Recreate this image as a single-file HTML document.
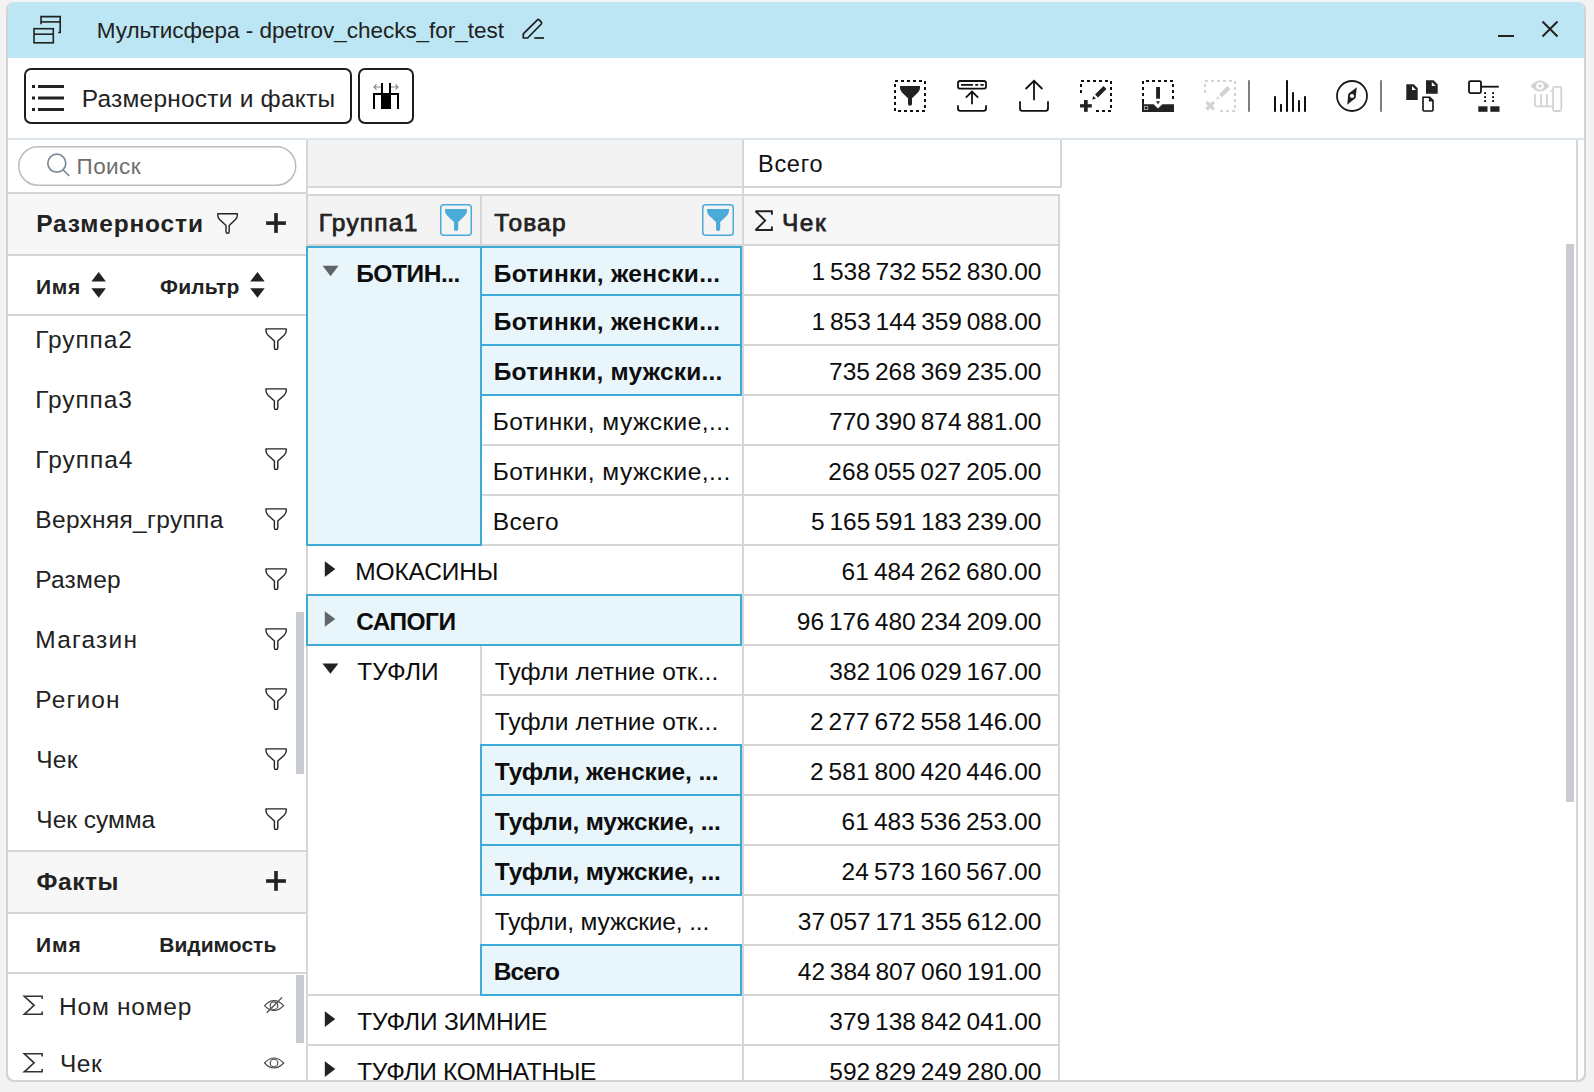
<!DOCTYPE html>
<html><head><meta charset="utf-8"><title>Мультисфера</title>
<style>html,body{margin:0;padding:0;background:#f3f3f3;overflow:hidden}svg{display:block}</style></head>
<body><svg width="1594" height="1092" viewBox="0 0 1594 1092">
<rect x="0" y="0" width="1594" height="1092" fill="#f3f3f3"/>
<rect x="6" y="2" width="1580" height="1080" rx="8" fill="#d3d3d3"/>
<rect x="8" y="2" width="1576" height="1078" rx="7" fill="#ffffff"/>
<path d="M8 58 V9 A7 7 0 0 1 15 2 H1577 A7 7 0 0 1 1584 9 V58 Z" fill="#bce6f3"/>
<rect x="8" y="138" width="1576" height="2" fill="#dfe5ec" />
<rect x="306" y="140" width="2" height="940" fill="#d6d6d6" />
<rect x="18.75" y="146.75" width="277" height="38.5" rx="19.25" fill="#fff" stroke="#bcbcbc" stroke-width="1.5"/>
<rect x="8" y="192" width="298" height="2" fill="#d6d6d6" />
<rect x="8" y="194" width="298" height="60" fill="#f7f7f7" />
<rect x="8" y="254" width="298" height="2" fill="#d6d6d6" />
<rect x="8" y="314" width="298" height="2" fill="#d6d6d6" />
<rect x="8" y="850" width="298" height="2" fill="#d6d6d6" />
<rect x="8" y="852" width="298" height="60" fill="#f7f7f7" />
<rect x="8" y="912" width="298" height="2" fill="#d6d6d6" />
<rect x="8" y="972" width="298" height="2" fill="#d6d6d6" />
<rect x="296" y="612" width="8" height="162" fill="#c8cbd0" />
<rect x="296" y="975" width="8" height="68" fill="#c8cbd0" />
<rect x="308" y="140" width="434" height="46" fill="#f3f3f3" />
<rect x="308" y="186" width="434" height="2" fill="#d6d6d6" />
<rect x="744" y="186" width="318" height="2" fill="#d6d6d6" />
<rect x="1060" y="140" width="2" height="48" fill="#d6d6d6" />
<rect x="742" y="140" width="2" height="940" fill="#d6d6d6" />
<rect x="308" y="194" width="752" height="2" fill="#d6d6d6" />
<rect x="308" y="196" width="172" height="48" fill="#f3f3f3" />
<rect x="482" y="196" width="260" height="48" fill="#f3f3f3" />
<rect x="744" y="196" width="314" height="48" fill="#f7f7f7" />
<rect x="480" y="196" width="2" height="48" fill="#d6d6d6" />
<rect x="1058" y="194" width="2" height="886" fill="#d6d6d6" />
<rect x="308" y="244" width="752" height="2" fill="#d6d6d6" />
<rect x="744" y="294" width="314" height="2" fill="#d6d6d6" />
<rect x="482" y="294" width="260" height="2" fill="#d6d6d6" />
<rect x="744" y="344" width="314" height="2" fill="#d6d6d6" />
<rect x="482" y="344" width="260" height="2" fill="#d6d6d6" />
<rect x="744" y="394" width="314" height="2" fill="#d6d6d6" />
<rect x="482" y="394" width="260" height="2" fill="#d6d6d6" />
<rect x="744" y="444" width="314" height="2" fill="#d6d6d6" />
<rect x="482" y="444" width="260" height="2" fill="#d6d6d6" />
<rect x="744" y="494" width="314" height="2" fill="#d6d6d6" />
<rect x="482" y="494" width="260" height="2" fill="#d6d6d6" />
<rect x="744" y="544" width="314" height="2" fill="#d6d6d6" />
<rect x="482" y="544" width="260" height="2" fill="#d6d6d6" />
<rect x="744" y="594" width="314" height="2" fill="#d6d6d6" />
<rect x="744" y="644" width="314" height="2" fill="#d6d6d6" />
<rect x="744" y="694" width="314" height="2" fill="#d6d6d6" />
<rect x="482" y="694" width="260" height="2" fill="#d6d6d6" />
<rect x="744" y="744" width="314" height="2" fill="#d6d6d6" />
<rect x="482" y="744" width="260" height="2" fill="#d6d6d6" />
<rect x="744" y="794" width="314" height="2" fill="#d6d6d6" />
<rect x="482" y="794" width="260" height="2" fill="#d6d6d6" />
<rect x="744" y="844" width="314" height="2" fill="#d6d6d6" />
<rect x="482" y="844" width="260" height="2" fill="#d6d6d6" />
<rect x="744" y="894" width="314" height="2" fill="#d6d6d6" />
<rect x="482" y="894" width="260" height="2" fill="#d6d6d6" />
<rect x="744" y="944" width="314" height="2" fill="#d6d6d6" />
<rect x="482" y="944" width="260" height="2" fill="#d6d6d6" />
<rect x="744" y="994" width="314" height="2" fill="#d6d6d6" />
<rect x="482" y="994" width="260" height="2" fill="#d6d6d6" />
<rect x="744" y="1044" width="314" height="2" fill="#d6d6d6" />
<rect x="744" y="1094" width="314" height="2" fill="#d6d6d6" />
<rect x="308" y="544" width="172" height="2" fill="#d6d6d6" />
<rect x="480" y="544" width="262" height="2" fill="#d6d6d6" />
<rect x="308" y="594" width="172" height="2" fill="#d6d6d6" />
<rect x="480" y="594" width="262" height="2" fill="#d6d6d6" />
<rect x="308" y="644" width="172" height="2" fill="#d6d6d6" />
<rect x="480" y="644" width="262" height="2" fill="#d6d6d6" />
<rect x="308" y="994" width="172" height="2" fill="#d6d6d6" />
<rect x="480" y="994" width="262" height="2" fill="#d6d6d6" />
<rect x="308" y="1044" width="172" height="2" fill="#d6d6d6" />
<rect x="480" y="1044" width="262" height="2" fill="#d6d6d6" />
<rect x="480" y="246" width="2" height="300" fill="#d6d6d6" />
<rect x="480" y="646" width="2" height="350" fill="#d6d6d6" />
<rect x="307" y="247" width="174" height="298" fill="#e8f5fb" stroke="#40aad7" stroke-width="2"/>
<rect x="481" y="247" width="260" height="48" fill="#e8f5fb" stroke="#40aad7" stroke-width="2"/>
<rect x="481" y="295" width="260" height="50" fill="#e8f5fb" stroke="#40aad7" stroke-width="2"/>
<rect x="481" y="345" width="260" height="50" fill="#e8f5fb" stroke="#40aad7" stroke-width="2"/>
<rect x="481" y="745" width="260" height="50" fill="#e8f5fb" stroke="#40aad7" stroke-width="2"/>
<rect x="481" y="795" width="260" height="50" fill="#e8f5fb" stroke="#40aad7" stroke-width="2"/>
<rect x="481" y="845" width="260" height="50" fill="#e8f5fb" stroke="#40aad7" stroke-width="2"/>
<rect x="481" y="945" width="260" height="50" fill="#e8f5fb" stroke="#40aad7" stroke-width="2"/>
<rect x="307" y="595" width="434" height="50" fill="#e8f5fb" stroke="#40aad7" stroke-width="2"/>
<rect x="1566" y="244" width="8" height="558" fill="#c8cbd0" />
<rect x="1576" y="140" width="2" height="940" fill="#d6d6d6" />
<g font-family="'Liberation Sans', sans-serif">
<text x="96.80" y="37.60" font-size="22.5" font-weight="400" fill="#222222" textLength="407.15" lengthAdjust="spacing">Мультисфера - dpetrov_checks_for_test</text>
<text x="81.70" y="106.60" font-size="24.5" font-weight="400" fill="#222222" textLength="253.41" lengthAdjust="spacing">Размерности и факты</text>
<text x="76.60" y="174.30" font-size="22.5" font-weight="400" fill="#6e6e6e" textLength="63.94" lengthAdjust="spacing">Поиск</text>
<text x="36.20" y="232.20" font-size="24.5" font-weight="700" fill="#222222" textLength="166.76" lengthAdjust="spacing">Размерности</text>
<text x="36.00" y="294.30" font-size="21" font-weight="700" fill="#222222" textLength="44.25" lengthAdjust="spacing">Имя</text>
<text x="160.00" y="294.30" font-size="21" font-weight="700" fill="#222222" textLength="79.43" lengthAdjust="spacing">Фильтр</text>
<text x="35.30" y="348.20" font-size="24.5" font-weight="400" fill="#222222" textLength="96.63" lengthAdjust="spacing">Группа2</text>
<text x="35.30" y="408.20" font-size="24.5" font-weight="400" fill="#222222" textLength="96.63" lengthAdjust="spacing">Группа3</text>
<text x="35.30" y="468.20" font-size="24.5" font-weight="400" fill="#222222" textLength="97.13" lengthAdjust="spacing">Группа4</text>
<text x="35.30" y="528.20" font-size="24.5" font-weight="400" fill="#222222" textLength="188.03" lengthAdjust="spacing">Верхняя_группа</text>
<text x="35.30" y="588.20" font-size="24.5" font-weight="400" fill="#222222" textLength="85.33" lengthAdjust="spacing">Размер</text>
<text x="35.30" y="648.20" font-size="24.5" font-weight="400" fill="#222222" textLength="101.63" lengthAdjust="spacing">Магазин</text>
<text x="35.30" y="708.20" font-size="24.5" font-weight="400" fill="#222222" textLength="84.23" lengthAdjust="spacing">Регион</text>
<text x="36.30" y="768.20" font-size="24.5" font-weight="400" fill="#222222" textLength="41.12" lengthAdjust="spacing">Чек</text>
<text x="36.30" y="828.20" font-size="24.5" font-weight="400" fill="#222222" textLength="118.93" lengthAdjust="spacing">Чек сумма</text>
<text x="36.60" y="889.90" font-size="24.5" font-weight="700" fill="#222222" textLength="81.82" lengthAdjust="spacing">Факты</text>
<text x="36.00" y="952.20" font-size="21" font-weight="700" fill="#222222" textLength="44.65" lengthAdjust="spacing">Имя</text>
<text x="159.30" y="952.20" font-size="21" font-weight="700" fill="#222222" textLength="117.01" lengthAdjust="spacing">Видимость</text>
<text x="59.10" y="1014.50" font-size="24.5" font-weight="400" fill="#222222" textLength="132.23" lengthAdjust="spacing">Ном номер</text>
<text x="60.00" y="1071.70" font-size="24.5" font-weight="400" fill="#222222" textLength="41.62" lengthAdjust="spacing">Чек</text>
<text x="758.00" y="172.10" font-size="23.5" font-weight="400" fill="#111" textLength="64.47" lengthAdjust="spacing">Всего</text>
<text x="318.70" y="230.90" font-size="24.5" font-weight="400" fill="#222222" stroke="#222222" stroke-width="0.75" textLength="98.63" lengthAdjust="spacing">Группа1</text>
<text x="494.30" y="230.90" font-size="24.5" font-weight="400" fill="#222222" stroke="#222222" stroke-width="0.75" textLength="71.23" lengthAdjust="spacing">Товар</text>
<text x="782.00" y="230.70" font-size="24.5" font-weight="400" fill="#222222" stroke="#222222" stroke-width="0.75" textLength="43.72" lengthAdjust="spacing">Чек</text>
<text x="356.20" y="281.80" font-size="24.5" font-weight="700" fill="#0d0d0d" textLength="104.21" lengthAdjust="spacing">БОТИН...</text>
<text x="493.80" y="281.80" font-size="24.5" font-weight="700" fill="#0d0d0d" textLength="226.31" lengthAdjust="spacing">Ботинки, женски...</text>
<text x="1041.43" y="279.80" font-size="24.5" font-weight="400" fill="#0d0d0d" text-anchor="end" textLength="229.83" lengthAdjust="spacing">1 538 732 552 830.00</text>
<text x="493.80" y="329.80" font-size="24.5" font-weight="700" fill="#0d0d0d" textLength="226.31" lengthAdjust="spacing">Ботинки, женски...</text>
<text x="1041.43" y="329.80" font-size="24.5" font-weight="400" fill="#0d0d0d" text-anchor="end" textLength="229.83" lengthAdjust="spacing">1 853 144 359 088.00</text>
<text x="493.80" y="379.80" font-size="24.5" font-weight="700" fill="#0d0d0d" textLength="228.61" lengthAdjust="spacing">Ботинки, мужски...</text>
<text x="1041.43" y="379.80" font-size="24.5" font-weight="400" fill="#0d0d0d" text-anchor="end" textLength="212.33" lengthAdjust="spacing">735 268 369 235.00</text>
<text x="492.80" y="429.80" font-size="24.5" font-weight="400" fill="#0d0d0d" textLength="237.51" lengthAdjust="spacing">Ботинки, мужские,...</text>
<text x="1041.43" y="429.80" font-size="24.5" font-weight="400" fill="#0d0d0d" text-anchor="end" textLength="212.33" lengthAdjust="spacing">770 390 874 881.00</text>
<text x="492.80" y="479.80" font-size="24.5" font-weight="400" fill="#0d0d0d" textLength="237.51" lengthAdjust="spacing">Ботинки, мужские,...</text>
<text x="1041.43" y="479.80" font-size="24.5" font-weight="400" fill="#0d0d0d" text-anchor="end" textLength="213.13" lengthAdjust="spacing">268 055 027 205.00</text>
<text x="492.80" y="529.80" font-size="24.5" font-weight="400" fill="#0d0d0d" textLength="65.73" lengthAdjust="spacing">Всего</text>
<text x="1041.43" y="529.80" font-size="24.5" font-weight="400" fill="#0d0d0d" text-anchor="end" textLength="230.43" lengthAdjust="spacing">5 165 591 183 239.00</text>
<text x="355.20" y="579.80" font-size="24.5" font-weight="400" fill="#0d0d0d" textLength="143.29" lengthAdjust="spacing">МОКАСИНЫ</text>
<text x="1041.43" y="579.80" font-size="24.5" font-weight="400" fill="#0d0d0d" text-anchor="end" textLength="199.93" lengthAdjust="spacing">61 484 262 680.00</text>
<text x="356.20" y="629.80" font-size="24.5" font-weight="700" fill="#0d0d0d" textLength="99.81" lengthAdjust="spacing">САПОГИ</text>
<text x="1041.43" y="629.80" font-size="24.5" font-weight="400" fill="#0d0d0d" text-anchor="end" textLength="244.63" lengthAdjust="spacing">96 176 480 234 209.00</text>
<text x="357.20" y="679.80" font-size="24.5" font-weight="400" fill="#0d0d0d" textLength="81.41" lengthAdjust="spacing">ТУФЛИ</text>
<text x="494.80" y="679.80" font-size="24.5" font-weight="400" fill="#0d0d0d" textLength="223.51" lengthAdjust="spacing">Туфли летние отк...</text>
<text x="1041.43" y="679.80" font-size="24.5" font-weight="400" fill="#0d0d0d" text-anchor="end" textLength="212.13" lengthAdjust="spacing">382 106 029 167.00</text>
<text x="494.80" y="729.80" font-size="24.5" font-weight="400" fill="#0d0d0d" textLength="223.51" lengthAdjust="spacing">Туфли летние отк...</text>
<text x="1041.43" y="729.80" font-size="24.5" font-weight="400" fill="#0d0d0d" text-anchor="end" textLength="231.43" lengthAdjust="spacing">2 277 672 558 146.00</text>
<text x="494.80" y="779.80" font-size="24.5" font-weight="700" fill="#0d0d0d" textLength="223.71" lengthAdjust="spacing">Туфли, женские, ...</text>
<text x="1041.43" y="779.80" font-size="24.5" font-weight="400" fill="#0d0d0d" text-anchor="end" textLength="231.43" lengthAdjust="spacing">2 581 800 420 446.00</text>
<text x="494.80" y="829.80" font-size="24.5" font-weight="700" fill="#0d0d0d" textLength="226.01" lengthAdjust="spacing">Туфли, мужские, ...</text>
<text x="1041.43" y="829.80" font-size="24.5" font-weight="400" fill="#0d0d0d" text-anchor="end" textLength="199.93" lengthAdjust="spacing">61 483 536 253.00</text>
<text x="494.80" y="879.80" font-size="24.5" font-weight="700" fill="#0d0d0d" textLength="226.01" lengthAdjust="spacing">Туфли, мужские, ...</text>
<text x="1041.43" y="879.80" font-size="24.5" font-weight="400" fill="#0d0d0d" text-anchor="end" textLength="199.93" lengthAdjust="spacing">24 573 160 567.00</text>
<text x="494.80" y="929.80" font-size="24.5" font-weight="400" fill="#0d0d0d" textLength="214.51" lengthAdjust="spacing">Туфли, мужские, ...</text>
<text x="1041.43" y="929.80" font-size="24.5" font-weight="400" fill="#0d0d0d" text-anchor="end" textLength="243.63" lengthAdjust="spacing">37 057 171 355 612.00</text>
<text x="493.80" y="979.80" font-size="24.5" font-weight="700" fill="#0d0d0d" textLength="66.17" lengthAdjust="spacing">Всего</text>
<text x="1041.43" y="979.80" font-size="24.5" font-weight="400" fill="#0d0d0d" text-anchor="end" textLength="243.63" lengthAdjust="spacing">42 384 807 060 191.00</text>
<text x="357.20" y="1029.80" font-size="24.5" font-weight="400" fill="#0d0d0d" textLength="190.04" lengthAdjust="spacing">ТУФЛИ ЗИМНИЕ</text>
<text x="1041.43" y="1029.80" font-size="24.5" font-weight="400" fill="#0d0d0d" text-anchor="end" textLength="212.13" lengthAdjust="spacing">379 138 842 041.00</text>
<text x="357.20" y="1079.80" font-size="24.5" font-weight="400" fill="#0d0d0d" textLength="239.24" lengthAdjust="spacing">ТУФЛИ КОМНАТНЫЕ</text>
<text x="1041.43" y="1079.80" font-size="24.5" font-weight="400" fill="#0d0d0d" text-anchor="end" textLength="212.13" lengthAdjust="spacing">592 829 249 280.00</text>
</g>
<g id="icons">
<!-- title bar: restore icon -->
<g fill="none" stroke="#222" stroke-width="1.6">
  <path d="M41 24.2 V16.6 H60.2 V32.5 H58.2"/>
  <path d="M41 21.9 H60.2"/>
  <rect x="34" y="28.7" width="19.3" height="14.1"/>
  <path d="M34 34.2 H53.3"/>
</g>
<!-- pencil -->
<g fill="none" stroke="#1e1e1e" stroke-width="1.7" stroke-linejoin="round">
  <path d="M523.3 38 V33.8 L537.4 19.9 Q538.3 19.1 539.2 19.9 L541.3 22.1 Q542.1 23.1 541.3 24 L527.6 38 Z"/>
  <path d="M534.3 38 H544"/>
</g>
<!-- minimize / close -->
<rect x="1498" y="35" width="16" height="2" fill="#222"/>
<g stroke="#222" stroke-width="2">
  <path d="M1542.5 21.5 L1557.5 36.5 M1557.5 21.5 L1542.5 36.5"/>
</g>

<!-- toolbar buttons -->
<rect x="25" y="69" width="326" height="54" rx="6" fill="none" stroke="#1e1e1e" stroke-width="2"/>
<g fill="#222">
  <rect x="32" y="85" width="3" height="3"/><rect x="32" y="96.5" width="3" height="3"/><rect x="32" y="108" width="3" height="3"/>
  <rect x="38" y="85" width="26" height="3"/><rect x="38" y="96.5" width="26" height="3"/><rect x="38" y="108" width="26" height="3"/>
</g>
<rect x="359" y="69" width="54" height="54" rx="6" fill="none" stroke="#1e1e1e" stroke-width="2"/>
<g fill="#000">
  <rect x="373" y="93" width="26" height="2"/>
  <rect x="373" y="93" width="2" height="16"/>
  <rect x="397" y="93" width="2" height="16"/>
  <rect x="381" y="93" width="10" height="16"/>
  <rect x="381" y="83" width="2" height="10"/>
  <rect x="389" y="83" width="2" height="10"/>
</g>
<g fill="none" stroke="#888" stroke-width="1.2">
  <path d="M374 87 H381 M376.5 84.3 L374 87 L376.5 89.7"/>
  <path d="M391 87 H398 M395.5 84.3 L398 87 L395.5 89.7"/>
</g>

<!-- toolbar icon 1: dashed filter -->
<rect x="895" y="81" width="30" height="30" fill="none" stroke="#111" stroke-width="2" stroke-dasharray="3 3"/>
<path d="M900 86 H920 V88 Q920 90.5 918 92.5 L912 98.3 V104 Q912 105.8 910 105.8 Q908 105.8 908 104 V98.3 L902 92.5 Q900 90.5 900 88 Z" fill="#222"/>
<!-- icon 2: upload with bar -->
<g fill="none" stroke="#111" stroke-width="1.8" stroke-linecap="butt">
  <rect x="958" y="81" width="28" height="7.6" rx="2.2"/>
  <path d="M961 84.8 H973 M975.3 84.8 H978.2 M980.4 84.8 H983.7"/>
  <path d="M972 92 V104.2 M965.8 97.6 L972 91.6 L978.2 97.6"/>
  <path d="M958 105.3 V108.5 Q958 110.8 960.3 110.8 H983.7 Q986 110.8 986 108.5 V105.3"/>
</g>
<!-- icon 3: upload -->
<g fill="none" stroke="#111" stroke-width="1.8">
  <path d="M1034 81 V100.3 M1025.6 89 L1034 80.8 L1042.4 89"/>
  <path d="M1020 101.3 V108.5 Q1020 110.8 1022.3 110.8 H1045.7 Q1048 110.8 1048 108.5 V101.3"/>
</g>
<!-- icon 4: dashed + pencil + plus -->
<g fill="none" stroke="#111" stroke-width="2" stroke-dasharray="3 3">
  <path d="M1081 93 V81 H1111 V111 H1096"/>
</g>
<g fill="#222">
  <path d="M1095 94.5 L1103.5 86 L1106.5 89 L1098 97.5 Z"/>
  <path d="M1092.2 99.7 L1093.3 96 L1096.0 98.6 Z"/>
  <rect x="1084" y="100" width="3.7" height="11.8"/>
  <rect x="1080" y="104.2" width="11.8" height="3.3"/>
</g>
<!-- icon 5 -->
<g fill="none" stroke="#111" stroke-width="2" stroke-dasharray="3 3">
  <path d="M1143 102 V81 H1173 V102"/>
</g>
<path d="M1142 102 H1144 V104.2 H1153.6 L1158 108.6 L1162.4 104.2 H1174 V112 H1142 Z" fill="#222"/>
<rect x="1144.5" y="106.3" width="3.3" height="3.3" fill="none" stroke="#bbb" stroke-width="0.8"/>
<rect x="1156.1" y="87" width="3.9" height="11.7" fill="#222"/>
<path d="M1156 101.2 H1160 L1158 104.2 Z" fill="#222"/>
<!-- icon 6 disabled -->
<g fill="none" stroke="#d3d3d3" stroke-width="2" stroke-dasharray="3 3">
  <path d="M1205 93 V81 H1235 V111 H1220"/>
</g>
<g fill="#d3d3d3">
  <path d="M1219 94.5 L1227.5 86 L1230.5 89 L1222 97.5 Z"/>
  <path d="M1216.2 99.7 L1217.3 96 L1220.0 98.6 Z"/>
</g>
<path d="M1206.5 102 L1214 109.5 M1214 102 L1206.5 109.5" stroke="#d3d3d3" stroke-width="3.2" fill="none"/>
<!-- separators -->
<rect x="1248.1" y="80.2" width="1.8" height="31.6" fill="#707070"/>
<rect x="1380.1" y="80.2" width="1.8" height="31.6" fill="#707070"/>
<!-- icon 7 bars -->
<g fill="#111">
  <rect x="1274" y="96.2" width="2" height="15.6"/>
  <rect x="1280" y="104.1" width="2" height="7.7"/>
  <rect x="1286" y="80.2" width="2" height="31.6"/>
  <rect x="1292" y="92.2" width="2" height="19.6"/>
  <rect x="1298" y="100.2" width="2" height="11.6"/>
  <rect x="1304" y="96.2" width="2" height="15.6"/>
</g>
<!-- icon 8 compass -->
<circle cx="1352" cy="96" r="15" fill="none" stroke="#1b1b1b" stroke-width="1.8"/>
<path d="M1356.8 87.2 L1355.6 98 L1347.2 104.8 L1348.3 93.8 Z" fill="#222"/>
<circle cx="1352" cy="96" r="2.1" fill="#fff"/>
<!-- icon 9 docs -->
<g fill="#222">
  <path d="M1406.3 84.3 H1413.8 L1417.7 88.2 V99.9 H1406.3 Z"/>
  <path d="M1426 80.3 H1433.6 L1437.7 84.4 V93.8 H1426 Z"/>
</g>
<g fill="#fff">
  <path d="M1412 86 V90 H1416 Z"/>
  <path d="M1431.8 82 V86 H1435.8 Z"/>
</g>
<path d="M1423 97.2 H1429.6 L1433 100.6 V110 Q1433 111 1432 111 H1424 Q1423 111 1423 110 Z" fill="none" stroke="#111" stroke-width="1.6"/>
<path d="M1428.8 97.2 V101.5 H1433 Z" fill="#222"/>
<!-- icon 10 tree -->
<rect x="1469" y="81.1" width="12" height="12" rx="1.5" fill="none" stroke="#111" stroke-width="1.8"/>
<rect x="1481" y="85.8" width="17.8" height="1.8" fill="#111"/>
<g fill="#000">
  <rect x="1484.2" y="92.2" width="1.8" height="1.8"/><rect x="1484.2" y="96.2" width="1.8" height="1.8"/><rect x="1484.2" y="100.2" width="1.8" height="1.8"/>
  <rect x="1492.2" y="92.2" width="1.8" height="1.8"/><rect x="1492.2" y="96.2" width="1.8" height="1.8"/><rect x="1492.2" y="100.2" width="1.8" height="1.8"/>
</g>
<rect x="1478.3" y="106.3" width="9.2" height="5.5" fill="#222"/>
<rect x="1490.3" y="106.3" width="9.2" height="5.5" fill="#222"/>
<!-- icon 11 disabled eye+bars -->
<g fill="none" stroke="#d3d3d3" stroke-width="1.8">
  <path d="M1530.5 86 Q1540 75 1549.5 86 Q1540 97 1530.5 86 Z" fill="#d3d3d3" stroke="none"/>
  <path d="M1535 94 V104.5 Q1535 106.3 1536.8 106.3 H1552.5"/>
  <path d="M1541 94 V106 M1547 94 V106"/>
  <path d="M1550.5 91 H1553"/>
  <rect x="1553" y="86.8" width="8.3" height="24.2" rx="1.5"/>
</g>
<circle cx="1540" cy="86" r="3.8" fill="#fff"/>
<circle cx="1540" cy="86" r="1.8" fill="#d3d3d3"/>

<!-- left panel: search icon -->
<g fill="none" stroke="#7b8a98" stroke-width="1.7">
  <circle cx="56.8" cy="163.2" r="9"/>
  <path d="M63.3 170 L69.3 176"/>
</g>
<!-- funnel outline (header) -->
<g fill="none" stroke="#222" stroke-width="1.4" stroke-linejoin="round">
  <path d="M217.8 213.7 H237.3 V215.5 Q237.3 217.6 235.5 219.5 L229.2 225.6 V231.5 Q229.2 233.3 227.6 233.3 Q226 233.3 226 231.5 V225.6 L219.6 219.5 Q217.8 217.6 217.8 215.5 Z"/>
</g>
<!-- plus -->
<g fill="#222">
  <rect x="274.2" y="213.1" width="3.6" height="19.8"/>
  <rect x="266.1" y="221.3" width="19.8" height="3.6"/>
  <rect x="274.2" y="871" width="3.6" height="19.8"/>
  <rect x="266.1" y="879.2" width="19.8" height="3.6"/>
</g>
<!-- sort arrows -->
<g fill="#222">
  <path d="M91.4 281.5 L98.7 272.1 L105.9 281.5 Z"/>
  <path d="M91.4 288.3 L105.9 288.3 L98.7 297.7 Z"/>
  <path d="M250.2 281.5 L257.5 272.1 L264.7 281.5 Z"/>
  <path d="M250.2 288.3 L264.7 288.3 L257.5 297.7 Z"/>
</g>
<path d="M266 328.9 H286.2 V330.7 Q286.2 332.9 284.4 334.9 L277.8 340.9 V347.8 Q277.8 349.6 276.1 349.6 Q274.4 349.6 274.4 347.8 V340.9 L267.8 334.9 Q266 332.9 266 330.7 Z" fill="none" stroke="#222" stroke-width="1.4" stroke-linejoin="round"/>
<path d="M266 388.9 H286.2 V390.7 Q286.2 392.9 284.4 394.9 L277.8 400.9 V407.8 Q277.8 409.6 276.1 409.6 Q274.4 409.6 274.4 407.8 V400.9 L267.8 394.9 Q266 392.9 266 390.7 Z" fill="none" stroke="#222" stroke-width="1.4" stroke-linejoin="round"/>
<path d="M266 448.9 H286.2 V450.7 Q286.2 452.9 284.4 454.9 L277.8 460.9 V467.8 Q277.8 469.6 276.1 469.6 Q274.4 469.6 274.4 467.8 V460.9 L267.8 454.9 Q266 452.9 266 450.7 Z" fill="none" stroke="#222" stroke-width="1.4" stroke-linejoin="round"/>
<path d="M266 508.9 H286.2 V510.7 Q286.2 512.9 284.4 514.9 L277.8 520.9 V527.8 Q277.8 529.6 276.1 529.6 Q274.4 529.6 274.4 527.8 V520.9 L267.8 514.9 Q266 512.9 266 510.7 Z" fill="none" stroke="#222" stroke-width="1.4" stroke-linejoin="round"/>
<path d="M266 568.9 H286.2 V570.7 Q286.2 572.9 284.4 574.9 L277.8 580.9 V587.8 Q277.8 589.6 276.1 589.6 Q274.4 589.6 274.4 587.8 V580.9 L267.8 574.9 Q266 572.9 266 570.7 Z" fill="none" stroke="#222" stroke-width="1.4" stroke-linejoin="round"/>
<path d="M266 628.9 H286.2 V630.7 Q286.2 632.9 284.4 634.9 L277.8 640.9 V647.8 Q277.8 649.6 276.1 649.6 Q274.4 649.6 274.4 647.8 V640.9 L267.8 634.9 Q266 632.9 266 630.7 Z" fill="none" stroke="#222" stroke-width="1.4" stroke-linejoin="round"/>
<path d="M266 688.9 H286.2 V690.7 Q286.2 692.9 284.4 694.9 L277.8 700.9 V707.8 Q277.8 709.6 276.1 709.6 Q274.4 709.6 274.4 707.8 V700.9 L267.8 694.9 Q266 692.9 266 690.7 Z" fill="none" stroke="#222" stroke-width="1.4" stroke-linejoin="round"/>
<path d="M266 748.9 H286.2 V750.7 Q286.2 752.9 284.4 754.9 L277.8 760.9 V767.8 Q277.8 769.6 276.1 769.6 Q274.4 769.6 274.4 767.8 V760.9 L267.8 754.9 Q266 752.9 266 750.7 Z" fill="none" stroke="#222" stroke-width="1.4" stroke-linejoin="round"/>
<path d="M266 808.9 H286.2 V810.7 Q286.2 812.9 284.4 814.9 L277.8 820.9 V827.8 Q277.8 829.6 276.1 829.6 Q274.4 829.6 274.4 827.8 V820.9 L267.8 814.9 Q266 812.9 266 810.7 Z" fill="none" stroke="#222" stroke-width="1.4" stroke-linejoin="round"/>
<g fill="none" stroke="#505050" stroke-width="1.2"><path d="M264.5 1005.7 Q274 995.7 283.7 1005.7 Q274 1015.7 264.5 1005.7 Z"/><circle cx="274" cy="1005.7" r="3.8"/><path d="M266.8 1012.7 L282 997.5" stroke-width="1.3"/></g>
<g fill="none" stroke="#505050" stroke-width="1.2"><path d="M264.5 1063.0 Q274 1053.0 283.7 1063.0 Q274 1073.0 264.5 1063.0 Z"/><circle cx="274" cy="1063.0" r="3.8"/></g>
<path d="M42.1 999.1 V996.3 H24.3 L34.1 1005.3 L24.3 1014.3 H42.1 V1011.5" fill="none" stroke="#333" stroke-width="1.6" stroke-linejoin="miter"/>
<path d="M42.1 1056.6 V1053.8 H24.3 L34.1 1062.8 L24.3 1071.8 H42.1 V1069.0" fill="none" stroke="#333" stroke-width="1.6" stroke-linejoin="miter"/>
<path d="M771.9 214.8 V211.2 H755.6 L765.2 220.6 L755.6 230 H771.9 V226.4" fill="none" stroke="#222" stroke-width="1.9" stroke-miterlimit="2"/>
<rect x="440.75" y="204.75" width="30.5" height="30.5" rx="3" fill="#f3f3f3" stroke="#4aabd8" stroke-width="1.5"/>
<path d="M445.0 209 H467.0 V210.8 Q467.0 213.6 465.0 215.6 L458.2 222 V229 Q458.2 231 456.1 231 Q454.0 231 454.0 229 V222 L447.0 215.6 Q445.0 213.6 445.0 210.8 Z" fill="#4aabd8"/>
<rect x="702.75" y="204.75" width="30.5" height="30.5" rx="3" fill="#f3f3f3" stroke="#4aabd8" stroke-width="1.5"/>
<path d="M707.0 209 H729.0 V210.8 Q729.0 213.6 727.0 215.6 L720.2 222 V229 Q720.2 231 718.1 231 Q716.0 231 716.0 229 V222 L709.0 215.6 Q707.0 213.6 707.0 210.8 Z" fill="#4aabd8"/>
<path d="M322.6 265.8 H338.6 L330.6 276.2 Z" fill="#60646b"/>
<path d="M324.8 561.3 L335.3 569.1 L324.8 576.9 Z" fill="#222"/>
<path d="M324.8 611.2 L335.3 619.0 L324.8 626.8 Z" fill="#60646b"/>
<path d="M322.4 663.4 H338.4 L330.4 673.8 Z" fill="#222"/>
<path d="M324.8 1011.3 L335.3 1019.1 L324.8 1026.9 Z" fill="#222"/>
<path d="M324.8 1061.3 L335.3 1069.1 L324.8 1076.9 Z" fill="#222"/>
</g>
</svg></body></html>
